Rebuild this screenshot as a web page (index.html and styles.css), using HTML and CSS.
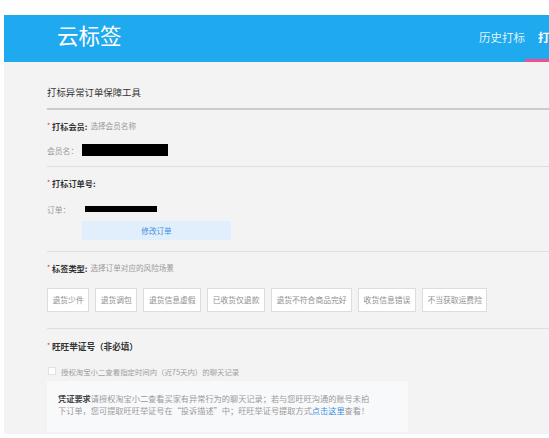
FILE: index.html
```html
<!DOCTYPE html>
<html lang="zh-CN">
<head>
<meta charset="utf-8">
<title>云标签</title>
<link rel="stylesheet" href="styles.css">
</head>
<body>
<div class="page">
  <header class="topbar">
    <div class="logo">云标签</div>
    <nav class="nav">
      <a class="nav-item">历史打标</a>
      <a class="nav-item active">打标工具</a>
    </nav>
  </header>
  <main class="content">
    <h1 class="title">打标异常订单保障工具</h1>

    <section class="sec sec-member">
      <div class="label-row"><span class="req">*</span><span class="label">打标会员:</span><span class="hint">选择会员名称</span></div>
      <div class="field-row member-row"><span class="field-name">会员名：</span><span class="redact redact-member"></span></div>
    </section>

    <section class="sec sec-order">
      <div class="label-row"><span class="req">*</span><span class="label">打标订单号:</span></div>
      <div class="field-row order-row"><span class="field-name">订单：</span><span class="redact redact-order"></span></div>
      <button class="edit-btn">修改订单</button>
    </section>

    <section class="sec sec-tags">
      <div class="label-row"><span class="req">*</span><span class="label">标签类型:</span><span class="hint">选择订单对应的风险场景</span></div>
      <div class="tags">
        <span class="tag">退货少件</span>
        <span class="tag">退货调包</span>
        <span class="tag">退货信息虚假</span>
        <span class="tag">已收货仅退款</span>
        <span class="tag">退货不符合商品完好</span>
        <span class="tag">收货信息错误</span>
        <span class="tag">不当获取运费险</span>
      </div>
    </section>

    <section class="sec sec-ww">
      <div class="label-row"><span class="req">*</span><span class="label label-ww">旺旺举证号（非必填）</span></div>
      <label class="check-row"><span class="checkbox"></span><span class="check-text">授权淘宝小二查看指定时间内（近75天内）的聊天记录</span></label>
      <div class="notice">
        <b>凭证要求</b>请授权淘宝小二查看买家有异常行为的聊天记录；若与您旺旺沟通的账号未拍<br>下订单，您可提取旺旺举证号在“投诉描述”中；旺旺举证号提取方式<a class="link">点击这里</a>查看！
      </div>
    </section>
  </main>
</div>
</body>
</html>
```
FILE: styles.css
```css
* { box-sizing: border-box; margin: 0; padding: 0; }
html, body { background: #ffffff; overflow: hidden; }
body {
  font-family: "Noto Sans CJK SC", "Microsoft YaHei", sans-serif;
  width: 549px;
  height: 438px;
}
.page {
  margin-top: 15px;
  margin-left: 4px;
  width: 545px;
  overflow: hidden;
}
.topbar {
  height: 47px;
  background: #1fa9ee;
  display: flex;
  align-items: stretch;
  overflow: hidden;
  white-space: nowrap;
}
.logo {
  color: #ffffff;
  font-size: 21.5px;
  line-height: 40px;
  padding-left: 53px;
  width: 117px;
  flex: none;
}
.nav {
  display: flex;
  margin-left: 358px;
  flex: none;
}
.nav-item {
  color: rgba(255,255,255,0.88);
  font-size: 11.5px;
  line-height: 44px;
  border-bottom: 3px solid transparent;
}
.nav-item.active {
  color: #ffffff;
  font-weight: bold;
  padding-left: 13px;
  border-bottom-color: #f04f8e;
}
.content {
  background: #f3f3f3;
  height: 372px;
  padding-left: 43px;
  color: #333333;
}
.title {
  font-size: 9.4px;
  font-weight: normal;
  line-height: 12px;
  padding-top: 24px;
  padding-bottom: 10px;
  border-bottom: 2px solid #cbcbcb;
  color: #333333;
}
.sec {
  border-bottom: 1px solid #dedede;
}
.label-row {
  display: flex;
  align-items: center;
  height: 12px;
  line-height: 12px;
  white-space: nowrap;
}
.req {
  color: #e8282a;
  font-size: 7px;
  width: 5px;
  margin-top: -3px;
}
.label {
  font-size: 8.2px;
  font-weight: bold;
  color: #333333;
  margin-right: 3px;
}
.label-ww { font-size: 8.6px; }
.hint {
  font-size: 7.6px;
  color: #9a9a9a;
}
.field-row {
  display: flex;
  align-items: center;
  height: 12px;
}
.field-name {
  font-size: 7.8px;
  color: #9a9a9a;
}
.redact { background: #000000; display: block; }
.sec-member { padding-top: 10px; padding-bottom: 10px; }
.member-row { margin-top: 12px; }
.field-name { width: 35px; }
.redact-member { width: 86px; height: 12px; }
.sec-order { padding-top: 10px; padding-bottom: 11px; }
.order-row { margin-top: 14px; }
.order-row .field-name { width: 38px; }
.redact-order { width: 72px; height: 6px; }
.edit-btn {
  display: block;
  margin-top: 6px;
  margin-left: 35px;
  width: 149px;
  height: 19px;
  border: none;
  background: #e1eefb;
  color: #3c8fe0;
  font-family: inherit;
  font-size: 7.6px;
}
.sec-tags { padding-top: 10px; padding-bottom: 16px; }
.tags {
  display: flex;
  gap: 6px;
  margin-top: 14px;
}
.tag {
  height: 24px;
  line-height: 22px;
  padding: 0 4.5px;
  background: #ffffff;
  border: 1px solid #dddddd;
  color: #8f8f8f;
  font-size: 7.8px;
  white-space: nowrap;
}
.sec-ww { padding-top: 11px; padding-bottom: 3px; border-bottom: none; }
.check-row {
  display: flex;
  align-items: center;
  height: 12px;
  margin-top: 13px;
}
.checkbox {
  width: 8px;
  height: 8px;
  background: #ffffff;
  border: 1px solid #e2e2e2;
  margin-left: 1px;
  margin-right: 5px;
}
.check-text {
  font-size: 7.4px;
  color: #a0a0a0;
  white-space: nowrap;
}
.notice {
  margin-top: 4px;
  width: 361px;
  height: 51px;
  background: #f8f9fb;
  padding: 11px 0 0 11px;
  font-size: 8.2px;
  line-height: 12px;
  color: #9a9a9a;
  white-space: nowrap;
}
.notice b { color: #444444; font-weight: bold; }
.link { color: #3c8fe0; }
```
